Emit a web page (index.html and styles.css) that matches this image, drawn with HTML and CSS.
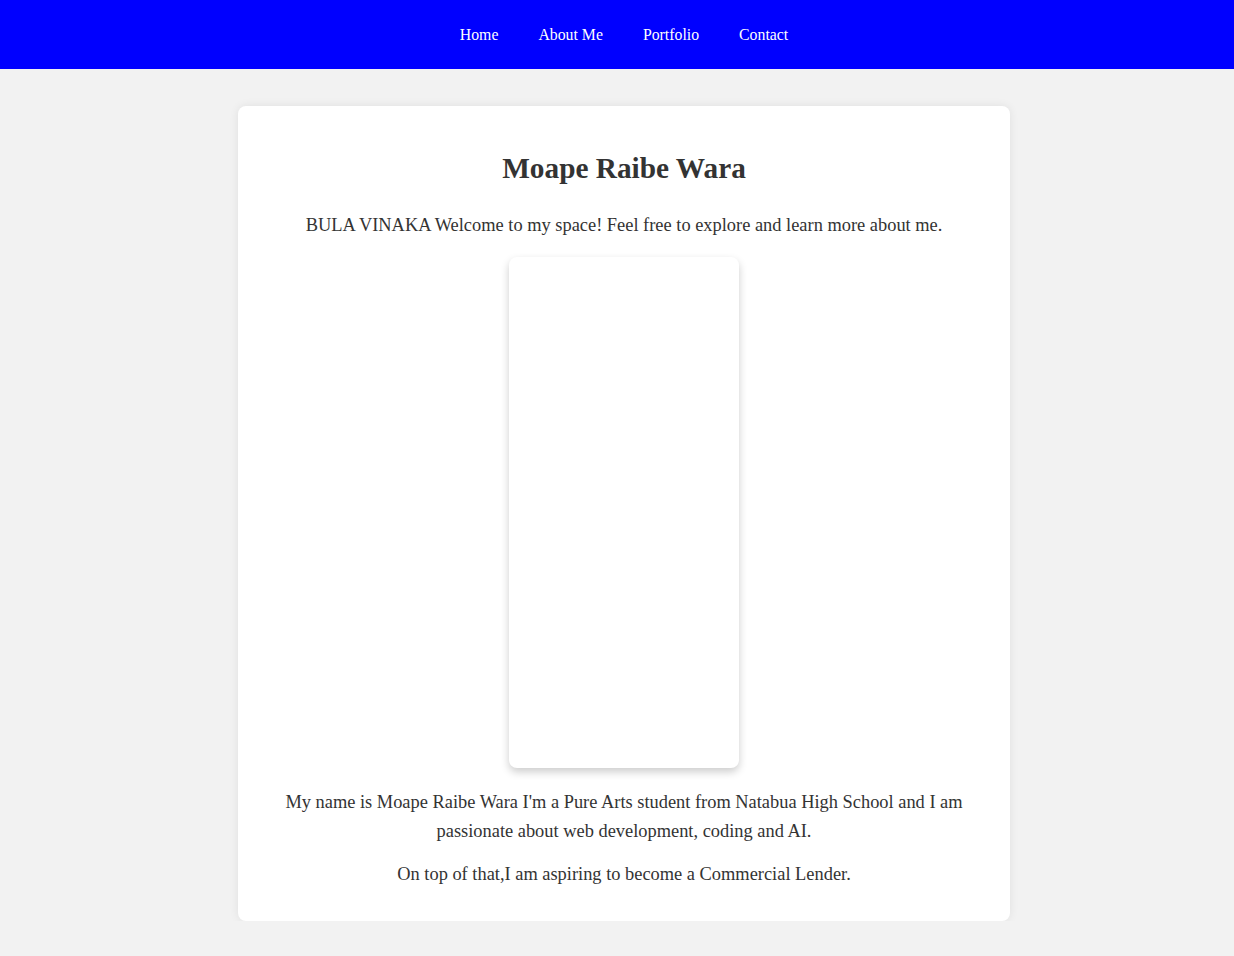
FILE: index.html
```html
<!DOCTYPE html>
<html lang="en">
<head>
<meta charset="utf-8">
<title>Moape Raibe Wara</title>
<link rel="stylesheet" href="styles.css">
</head>
<body>
<nav class="topnav">
  <a href="#" class="navlink">Home</a>
  <a href="#" class="navlink">About Me</a>
  <a href="#" class="navlink">Portfolio</a>
  <a href="#" class="navlink">Contact</a>
</nav>
<div class="page">
  <main class="card">
    <h1 class="title">Moape Raibe Wara</h1>
    <p class="intro">BULA VINAKA Welcome to my space! Feel free to explore and learn more about me.</p>
    <div class="photo"></div>
    <p class="bio">My name is Moape Raibe Wara I'm a Pure Arts student from Natabua High School and I am passionate about web development, coding and AI.</p>
    <p class="bio last">On top of that,I am aspiring to become a Commercial Lender.</p>
  </main>
</div>
</body>
</html>
```

FILE: styles.css
```css
html, body {
  margin: 0;
  padding: 0;
}
body {
  background: #f2f2f2;
  font-family: "Liberation Serif", "Times New Roman", serif;
  color: #333;
}
.topnav {
  background: #0000ff;
  height: 69px;
  box-sizing: border-box;
  padding-left: 14px;
  display: flex;
  justify-content: center;
  align-items: center;
  gap: 40px;
}
.navlink {
  color: #fff;
  text-decoration: none;
  font-size: 15.8px;
}
.page {
  padding: 37px 0 0 14px;
}
.card {
  width: 772px;
  box-sizing: border-box;
  margin: 0 auto;
  background: #fff;
  border-radius: 8px;
  box-shadow: 0 0 10px rgba(0, 0, 0, 0.08);
  padding: 46px 40px 32px;
  display: flex;
  flex-direction: column;
  align-items: center;
  text-align: center;
}
.title {
  margin: 0;
  font-size: 29.3px;
  line-height: 32px;
  font-weight: bold;
}
.intro {
  margin: 27px 0 0;
  font-size: 18.4px;
  line-height: 29px;
}
.photo {
  margin-top: 17px;
  width: 230px;
  height: 511px;
  background: #fff;
  border-radius: 8px;
  box-shadow: 0 4px 8px rgba(0, 0, 0, 0.2);
}
.bio {
  margin: 20px 0 0;
  font-size: 18.4px;
  line-height: 29px;
}
.bio.last {
  margin-top: 14px;
}
```
